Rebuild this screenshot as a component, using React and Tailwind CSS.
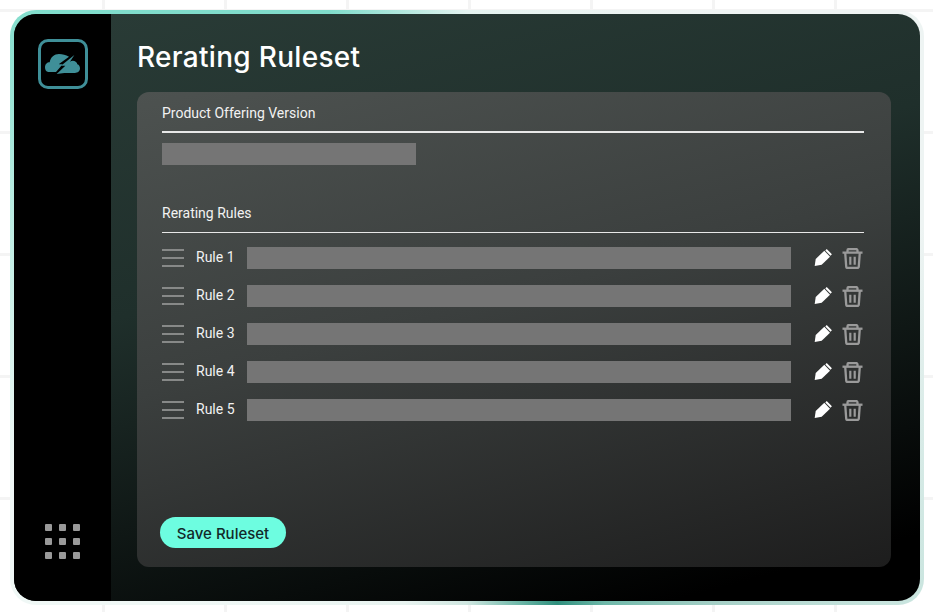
import React from "react";

const rules = ["Rule 1", "Rule 2", "Rule 3", "Rule 4", "Rule 5"];

const Logo = () => (
  <div className="w-[50px] h-[50px] rounded-[10px] border-[3px] border-[#3f8f98] flex items-center justify-center">
    <svg viewBox="0 0 105 60" className="w-[35px] h-[20px]" fill="#3f8f98">
      <path d="M10 54C3 54 0 47 0 40C0 31 6 25 14 25C17 9 28 0 42 0C53 0 62 3 72 8L41 31L53 31L33 54Z" />
      <path d="M88 3L75 23C84 17 95 22 97 31C102 32 105 38 105 43C105 52 98 57 90 57L58 57L35 60L61 35L48 35Z" />
    </svg>
  </div>
);

const Pencil = () => (
  <svg viewBox="0 0 18 18" className="w-[18px] h-[18px]" fill="#ffffff">
    <path d="M0.700 17L1.700 10L10.300 1.700L16 7.700L7.700 15.700Z" />
    <path d="M12 0.800L17.200 6" stroke="#ffffff" strokeWidth="2" />
  </svg>
);

const Trash = () => (
  <svg viewBox="0 0 21 21" className="w-[21px] h-[21px]" fill="none" stroke="#9a9a9a" strokeWidth="2.300">
    <path d="M0.500 4.700h20" />
    <path d="M5.500 4.700V2.500A1.500 1.500 0 0 1 7 1h7A1.500 1.500 0 0 1 15.500 2.500V4.700" />
    <path d="M3.200 4.700l1 13.800a1.500 1.500 0 0 0 1.500 1.500h9.600a1.500 1.500 0 0 0 1.500-1.500l1-13.800" />
    <path d="M8.300 8.700v8M12.700 8.700v8" strokeWidth="2.200" />
  </svg>
);

const Drag = () => (
  <div className="w-[22px] flex flex-col gap-[5.500px]">
    <div className="h-[2.500px] bg-[#878988]"></div>
    <div className="h-[2.500px] bg-[#878988]"></div>
    <div className="h-[2.500px] bg-[#878988]"></div>
  </div>
);

const RuleRow = ({ name }) => {
  return (
    <div className="flex items-center h-[22px]">
      <Drag />
      <span className="w-[63px] pl-[12px] pb-[2px] text-sm text-[#f2f2f2]">{name}</span>
      <div className="w-[544px] h-[22px] bg-[#757575]"></div>
      <div className="ml-[23px] flex">
        <Pencil />
      </div>
      <div className="ml-[10px] flex">
        <Trash />
      </div>
    </div>
  );
};

export default function App() {
  return (
    <div className="w-[933px] h-[612px] overflow-hidden bg-white bg-[linear-gradient(to_right,#f4f4f4_3px,transparent_3px),linear-gradient(to_bottom,#f4f4f4_3px,transparent_3px)] bg-[size:122px_122px] bg-[position:102px_9px] pl-[10px] pt-[9.500px] font-['Roboto',sans-serif]">
      <div className="w-[914px] h-[595px] rounded-[26px] p-[4px] bg-[conic-gradient(#e4f3f0_0deg,#eef4f3_40deg,#eef4f3_80deg,#c8e4de_125deg,#a5cfc6_140deg,#6fb8a9_155deg,#2f8f7d_163deg,#6fb8a9_170deg,#cfe6e0_180deg,#e8f3f0_192deg,#f0f8f6_225deg,#f0f8f6_250deg,#b5ebe0_285deg,#80dccb_305deg,#80dccb_335deg,#e4f3f0_360deg)]">
        <div className="flex h-full rounded-[22px] overflow-hidden bg-[linear-gradient(165deg,#2a3c37_0%,#1f2f2b_40%,#000000_92%)]">
          <aside className="w-[97px] bg-black flex flex-col items-center justify-between pt-[25.500px] pb-[42px]">
            <Logo />
            <div className="grid grid-cols-3 gap-[7px]">
              {Array.from({ length: 9 }).map((_, i) => (
                <div key={i} className="w-[7px] h-[7px] rounded-[1px] bg-[#999999]"></div>
              ))}
            </div>
          </aside>
          <main className="flex-1 pl-[26px] pr-[29px] pt-[24px]">
            <h1 className="text-[28px] leading-[38px] font-medium text-white font-['Inter',sans-serif] tracking-[0.3px]">
              Rerating Ruleset
            </h1>
            <section className="mt-[16px] h-[475px] rounded-[12px] bg-[linear-gradient(165deg,#4d5250_0%,#3b3f3e_45%,#1d1d1d_100%)] pl-[25px] pr-[27px] pt-[13px]">
              <p className="text-sm leading-[17px] text-[#f2f2f2]">Product Offering Version</p>
              <div className="mt-[9px] h-[2px] bg-[#e8e8e8]"></div>
              <div className="mt-[10px] w-[254px] h-[22px] bg-[#757575]"></div>
              <p className="mt-[40px] text-sm leading-[17px] text-[#f2f2f2]">Rerating Rules</p>
              <div className="mt-[10px] h-[1.500px] bg-[#e8e8e8]"></div>
              <div className="mt-[14px] flex flex-col gap-[16px]">
                {rules.map((r) => (
                  <RuleRow key={r} name={r} />
                ))}
              </div>
              <button className="mt-[96px] -ml-[2px] w-[126px] h-[31px] pt-[3px] rounded-full bg-[#6dfde0] text-[#12292a] text-[15px] font-medium font-['Inter',sans-serif]">
                Save Ruleset
              </button>
            </section>
          </main>
        </div>
      </div>
    </div>
  );
}
